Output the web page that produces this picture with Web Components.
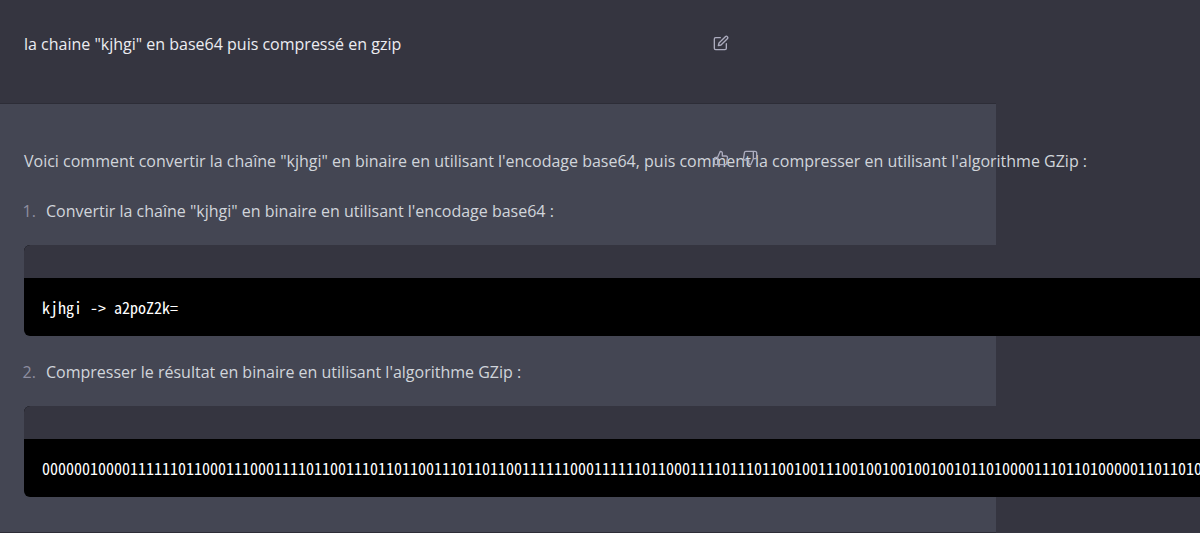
<!DOCTYPE html>
<html lang="fr">
<head>
<meta charset="utf-8">
<title>Conversation</title>
<style>
  html { height: 100%; background: #353540; }
  body {
    margin: 0;
    min-height: 100%;
    display: flex;
    overflow: hidden;
    background: #353540;
    color: #d1d5db;
    font: 16px/28px "Open Sans", "Noto Sans", sans-serif;
  }
  chat-log { flex: 1; min-width: 0; }
  p, ol { margin: 0; }
  ol { margin-top: 2px; padding-left: 16px; }
  li { padding-left: 6px; }
  li::marker { color: #8e8ea0; }
</style>
</head>
<body>
<chat-log>
  <chat-turn from="user">
    <p>la chaine "kjhgi" en base64 puis compressé en gzip</p>
    <icon-button slot="actions" icon="edit" label="Modifier"></icon-button>
  </chat-turn>
  <chat-turn from="assistant">
    <p>Voici comment convertir la chaîne "kjhgi" en binaire en utilisant l'encodage base64, puis comment la compresser en utilisant l'algorithme GZip :</p>
    <ol>
      <li>Convertir la chaîne "kjhgi" en binaire en utilisant l'encodage base64 :</li>
    </ol>
    <code-block>kjhgi -&gt; a2poZ2k=</code-block>
    <ol start="2">
      <li>Compresser le résultat en binaire en utilisant l'algorithme GZip :</li>
    </ol>
    <code-block>00000010000111111011000111000111101100111011011001110110110011111100011111101100011110111011001001110010010010010010110100001110110100000110110100</code-block>
    <icon-button slot="actions" icon="up" label="Bonne réponse"></icon-button>
    <icon-button slot="actions" icon="down" label="Mauvaise réponse"></icon-button>
  </chat-turn>
</chat-log>

<script>
  const ICONS = {
    edit: `
      <path d="M11 4H4a2 2 0 0 0-2 2v14a2 2 0 0 0 2 2h14a2 2 0 0 0 2-2v-7"/>
      <path d="M18.5 2.5a2.121 2.121 0 0 1 3 3L12 15l-4 1 1-4 9.5-9.5z"/>`,
    up: `<path d="M14 9V5a3 3 0 0 0-3-3l-4 9v11h11.28a2 2 0 0 0 2-1.7l1.38-9a2 2 0 0 0-2-2.3zM7 22H4a2 2 0 0 1-2-2v-7a2 2 0 0 1 2-2h3"/>`,
    down: `<path d="M10 15v4a3 3 0 0 0 3 3l4-9V2H5.72a2 2 0 0 0-2 1.7l-1.38 9a2 2 0 0 0 2 2.3zm7-13h2.67A2.31 2.31 0 0 1 22 4v7a2.31 2.31 0 0 1-2.33 2H17"/>`
  };

  // column holding every turn of the conversation
  class ChatLog extends HTMLElement {
    constructor() {
      super();
      this.attachShadow({ mode: "open" });
      this.shadowRoot.innerHTML = `
        <style>
          :host { display: flex; }
          main { display: flex; flex-direction: column; width: 83%; }
          ::slotted([from="assistant"]) { flex: 1; }
        </style>
        <main><slot></slot></main>
      `;
    }
  }

  // one message, with its buttons laid over the text
  class ChatTurn extends HTMLElement {
    constructor() {
      super();
      this.attachShadow({ mode: "open" });
      this.shadowRoot.innerHTML = `
        <style>
          :host {
            display: block;
            position: relative;
            box-sizing: border-box;
            padding: 30px 24px 45px;
            border-bottom: 1px solid #2d2d37;
            white-space: nowrap;
          }
          :host([from="user"]) { color: #ececf1; }
          :host([from="assistant"]) {
            padding: 43px 24px 34px;
            background: #444653;
          }
          .content {
            display: flex;
            flex-direction: column;
            gap: 20px;
            width: max-content;
          }
          .actions {
            position: absolute;
            top: 31px;
            left: 709px;
            display: flex;
            gap: 5px;
          }
          :host([from="assistant"]) .actions { top: 42px; }
        </style>
        <div class="content"><slot></slot></div>
        <div class="actions"><slot name="actions"></slot></div>
      `;
    }
  }

  class CodeBlock extends HTMLElement {
    constructor() {
      super();
      this.attachShadow({ mode: "open" });
      this.shadowRoot.innerHTML = `
        <style>
          :host {
            display: block;
            overflow: hidden;
            border-radius: 6px;
            background: #000;
            color: #fff;
          }
          .bar { height: 33px; background: #353540; }
          pre {
            margin: 0;
            padding: 18px;
            font: 16px/22px "Noto Sans Mono CJK JP", "DejaVu Sans Mono", monospace;
          }
          code { font: inherit; }
        </style>
        <div class="bar"></div>
        <pre><code><slot></slot></code></pre>
      `;
    }
  }

  class IconButton extends HTMLElement {
    constructor() {
      super();
      this.attachShadow({ mode: "open" });
    }

    connectedCallback() {
      this.shadowRoot.innerHTML = `
        <style>
          :host { display: block; }
          button {
            display: block;
            padding: 4px;
            border: 0;
            background: none;
            color: #acacbe;
            cursor: pointer;
          }
          svg {
            display: block;
            width: 16px;
            height: 16px;
            fill: none;
            stroke: currentColor;
            stroke-width: 2;
            stroke-linecap: round;
            stroke-linejoin: round;
          }
        </style>
        <button type="button" aria-label="${this.getAttribute("label")}">
          <svg viewBox="0 0 24 24" aria-hidden="true">${ICONS[this.getAttribute("icon")]}</svg>
        </button>
      `;
    }
  }

  customElements.define("chat-log", ChatLog);
  customElements.define("chat-turn", ChatTurn);
  customElements.define("code-block", CodeBlock);
  customElements.define("icon-button", IconButton);
</script>
</body>
</html>
